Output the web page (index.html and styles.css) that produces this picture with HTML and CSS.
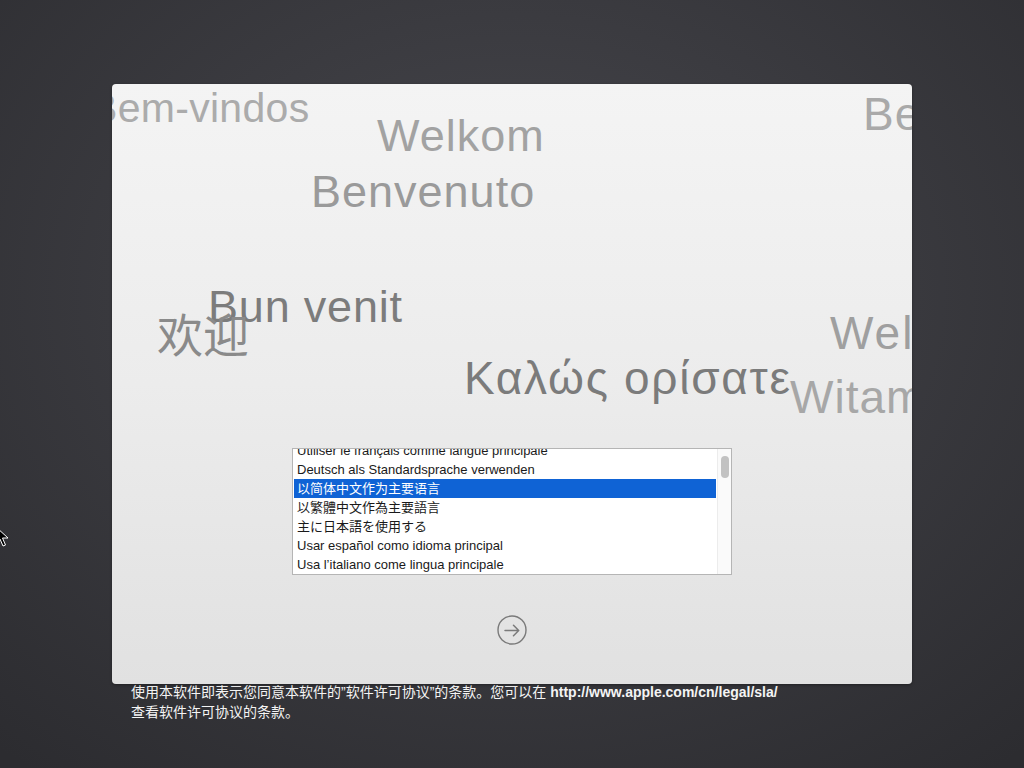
FILE: index.html
```html
<!DOCTYPE html>
<html lang="zh-CN">
<head>
<meta charset="utf-8">
<title>Language</title>
<link rel="stylesheet" href="styles.css">
</head>
<body>
<div class="screen">
  <div class="panel">
    <div class="words">
      <span class="word w-bem">Bem-vindos</span>
      <span class="word w-be">Be</span>
      <span class="word w-welkom">Welkom</span>
      <span class="word w-benvenuto">Benvenuto</span>
      <span class="word w-bun">Bun venit</span>
      <span class="word w-huanying">欢迎</span>
      <span class="word w-kalos">Καλώς ορίσατε</span>
      <span class="word w-welc">Welc</span>
      <span class="word w-witam">Witam</span>
    </div>
    <div class="listbox">
      <div class="list">
        <div class="rows">
          <div class="row">Utiliser le français comme langue principale</div>
          <div class="row">Deutsch als Standardsprache verwenden</div>
          <div class="row selected sc" lang="zh-CN">以简体中文作为主要语言</div>
          <div class="row tc" lang="zh-TW">以繁體中文作為主要語言</div>
          <div class="row jp" lang="ja">主に日本語を使用する</div>
          <div class="row">Usar español como idioma principal</div>
          <div class="row">Usa l’italiano come lingua principale</div>
        </div>
      </div>
      <div class="scrolltrack"><div class="thumb"></div></div>
    </div>
    <div class="next">
      <svg width="30" height="30" viewBox="0 0 30 30">
        <circle cx="15" cy="15" r="14" fill="none" stroke="#7a7a7a" stroke-width="1.4"/>
        <path d="M8 15.5 H21.5 M16.5 10.3 L21.7 15.5 L16.5 20.7" fill="none" stroke="#7a7a7a" stroke-width="1.5" stroke-linecap="round" stroke-linejoin="round"/>
      </svg>
    </div>
  </div>
  <div class="footer">
    <p>使用本软件即表示您同意本软件的”软件许可协议”的条款。您可以在 <b>http://www.apple.com/cn/legal/sla/</b></p>
    <p>查看软件许可协议的条款。</p>
  </div>
  <svg class="cursor" width="14" height="22" viewBox="0 0 14 22">
    <path d="M1 1 L1 17 L5 13 L8 20 L10.5 19 L7.5 12 L13 12 Z" fill="#000" stroke="#fff" stroke-width="1"/>
  </svg>
</div>
</body>
</html>
```

FILE: styles.css
```css
html, body {
  margin: 0;
  padding: 0;
  width: 1024px;
  height: 768px;
  overflow: hidden;
}

body {
  font-family: "Liberation Sans", "Noto Sans CJK SC", sans-serif;
}

.screen {
  position: relative;
  width: 1024px;
  height: 768px;
  display: flex;
  flex-direction: column;
  align-items: center;
  padding-top: 84px;
  box-sizing: border-box;
  background: radial-gradient(ellipse 75% 80% at 50% 38%, #47474d 0%, #3b3b40 45%, #2c2c30 100%);
}

.panel {
  position: relative;
  width: 800px;
  height: 600px;
  border-radius: 4px;
  overflow: hidden;
  background: linear-gradient(180deg, #f4f4f4 0%, #ececec 50%, #e1e1e1 100%);
  box-shadow: 0 1px 3px rgba(0, 0, 0, 0.35);
  display: flex;
  flex-direction: column;
  align-items: center;
}

.words {
  position: absolute;
  inset: 0;
}

.word {
  position: absolute;
  white-space: nowrap;
  line-height: 1;
  font-size: 46px;
  letter-spacing: 1px;
  font-family: "Liberation Sans", "Noto Sans CJK SC", sans-serif;
}

.w-bem { left: -22px; top: 4px; font-size: 41px; letter-spacing: 0.3px; color: #ababab; }
.w-be { left: 751px; top: 7px; color: #a9a9a9; }
.w-welkom { left: 265px; top: 29px; font-size: 45px; color: #a2a2a2; }
.w-benvenuto { left: 199px; top: 85px; font-size: 45px; color: #9a9a9a; }
.w-bun { left: 96px; top: 200px; font-size: 45px; letter-spacing: 0.8px; color: #7c7c7c; }
.w-huanying { left: 45px; top: 229px; letter-spacing: 0; color: #8a8a8a; }
.w-kalos { left: 352px; top: 271px; letter-spacing: 1.7px; color: #7b7b7b; }
.w-welc { left: 718px; top: 226px; letter-spacing: 2px; color: #9f9f9f; }
.w-witam { left: 678px; top: 290px; color: #a7a7a7; }

.listbox {
  position: relative;
  z-index: 1;
  margin-top: 364px;
  width: 440px;
  height: 127px;
  box-sizing: border-box;
  border: 1px solid #b5b5b5;
  background: #ffffff;
  display: flex;
}

.list {
  flex: 1;
  overflow: hidden;
  padding: 0 1px;
}

.rows {
  margin-top: -8px;
}

.row {
  height: 19px;
  line-height: 19px;
  padding-left: 3px;
  font-size: 13px;
  color: #1a1a1a;
  white-space: nowrap;
}

.row.sc { font-family: "Liberation Sans", "Noto Sans CJK SC", sans-serif; }
.row.tc { font-family: "Liberation Sans", "Noto Sans CJK TC", sans-serif; }
.row.jp { font-family: "Liberation Sans", "Noto Sans CJK JP", sans-serif; }

.row.selected {
  background: #0f63d5;
  color: #ffffff;
}

.scrolltrack {
  width: 14px;
  border-left: 1px solid #ececec;
  background: #fafafa;
  display: flex;
  justify-content: center;
  padding-top: 7px;
  box-sizing: border-box;
}

.thumb {
  width: 8px;
  height: 22px;
  border-radius: 4px;
  background: #c2c2c2;
}

.next {
  position: relative;
  z-index: 1;
  margin-top: 40px;
  width: 30px;
  height: 30px;
}

.next svg {
  display: block;
}

.footer {
  width: 800px;
  box-sizing: border-box;
  padding: 0 0 0 19px;
  color: #f4f4f4;
  font-size: 14px;
  font-family: "Liberation Sans", "Noto Sans CJK SC", sans-serif;
}

.footer p {
  margin: 0;
  line-height: 20px;
  white-space: nowrap;
}

.footer p:first-child {
  margin-top: -2px;
}

.footer b {
  font-weight: bold;
}

.cursor {
  position: absolute;
  left: -5px;
  top: 526px;
}
```
